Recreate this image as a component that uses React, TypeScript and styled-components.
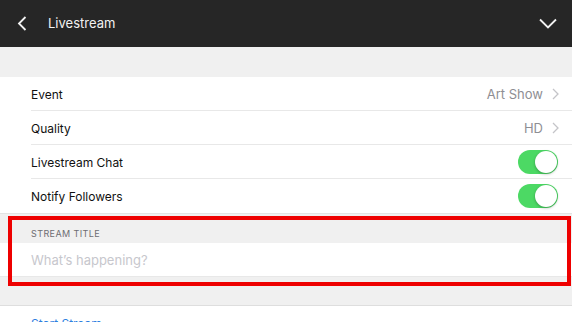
import * as React from 'react';
import styled, { createGlobalStyle } from 'styled-components';

const GlobalStyle = createGlobalStyle`
  html, body {
    margin: 0;
    padding: 0;
    background: #f0f0f0;
    overflow: hidden;
  }
  body {
    font-family: Inter, "Liberation Sans", Arial, sans-serif;
    -webkit-font-smoothing: antialiased;
  }
`;

const Screen = styled.div`
  position: relative;
  width: 572px;
  height: 322px;
  overflow: hidden;
  display: flex;
  flex-direction: column;
  & > * {
    flex-shrink: 0;
  }
`;

const NavBar = styled.header`
  height: 47px;
  background: #262626;
  display: flex;
  align-items: center;
  padding: 0 15px 0 17px;
`;

const NavTitle = styled.div`
  color: #f2f2f2;
  font-size: 13px;
  margin-left: 21px;
  flex: 1;
  padding-bottom: 1px;
`;

const Spacer = styled.div<{ $h: number }>`
  height: ${p => p.$h}px;
  background: #f0f0f0;
`;

const Group = styled.section`
  background: #fff;
  border-bottom: 1px solid #e3e3e3;
`;

const Row = styled.div<{ $last?: boolean }>`
  height: 34px;
  margin-left: 31px;
  padding-right: 13px;
  display: flex;
  align-items: center;
  box-sizing: border-box;
  border-bottom: ${p => (p.$last ? 'none' : '1px solid #e8e8e8')};
`;

const Label = styled.span`
  flex: 1;
  font-size: 12px;
  color: #111;
  padding-top: 1px;
`;

const Value = styled.span`
  font-size: 13px;
  color: #8e8e93;
  margin-right: 9px;
`;

const SwitchTrack = styled.div`
  width: 40px;
  height: 24px;
  border-radius: 12px;
  background: #4cd964;
  position: relative;
  margin-right: 1px;
`;

const SwitchKnob = styled.div`
  position: absolute;
  top: 1px;
  right: 1px;
  width: 22px;
  height: 22px;
  border-radius: 50%;
  background: #fff;
  box-shadow: 0 1px 3px rgba(0, 0, 0, 0.3);
`;

const SectionHeader = styled.div`
  height: 29px;
  box-sizing: border-box;
  padding: 14px 0 0 31px;
  font-size: 9px;
  letter-spacing: 0.4px;
  color: #6d6d72;
  background: #f0f0f0;
`;

const InputRow = styled.div`
  height: 33px;
  background: #fff;
  border-bottom: 1px solid #e8e8e8;
  display: flex;
  align-items: center;
  padding-left: 31px;
`;

const TitleInput = styled.input`
  border: none;
  outline: none;
  background: transparent;
  font-family: inherit;
  font-size: 13px;
  color: #111;
  padding: 0;
  width: 100%;
  &::placeholder {
    color: #c7c7cd;
  }
`;

const ActionGroup = styled.div`
  height: 40px;
  background: #fff;
  border-top: 1px solid #dedede;
  padding: 9px 0 0 31px;
  line-height: 14px;
`;

const ActionLink = styled.span`
  color: #2f80e0;
  font-size: 12px;
`;

const Highlight = styled.div`
  position: absolute;
  left: 8px;
  top: 216px;
  width: 563px;
  height: 70px;
  box-sizing: border-box;
  border: 4px solid #ee0000;
  pointer-events: none;
`;

const Chevron = () => (
  <svg width="7" height="12" viewBox="0 0 7 12" fill="none">
    <path d="M1 1l5 5-5 5" stroke="#c4c4c8" strokeWidth="1.3" />
  </svg>
);

const Switch = () => (
  <SwitchTrack>
    <SwitchKnob />
  </SwitchTrack>
);

const App: React.FC = () => (
  <Screen>
    <GlobalStyle />
    <NavBar>
      <svg width="10" height="15" viewBox="0 0 10 15" fill="none">
        <path d="M8.5 1L2 7.5 8.5 14" stroke="#f2f2f2" strokeWidth="1.8" />
      </svg>
      <NavTitle>Livestream</NavTitle>
      <svg width="18" height="11" viewBox="0 0 18 11" fill="none">
        <path d="M1 1.5l8 8 8-8" stroke="#f2f2f2" strokeWidth="1.8" />
      </svg>
    </NavBar>
    <Spacer $h={30} />
    <Group>
      <Row>
        <Label>Event</Label>
        <Value>Art Show</Value>
        <Chevron />
      </Row>
      <Row>
        <Label>Quality</Label>
        <Value>HD</Value>
        <Chevron />
      </Row>
      <Row>
        <Label>Livestream Chat</Label>
        <Switch />
      </Row>
      <Row $last>
        <Label>Notify Followers</Label>
        <Switch />
      </Row>
    </Group>
    <SectionHeader>STREAM TITLE</SectionHeader>
    <InputRow>
      <TitleInput placeholder="What’s happening?" />
    </InputRow>
    <Spacer $h={28} />
    <ActionGroup>
      <ActionLink>Start Stream</ActionLink>
    </ActionGroup>
    <Highlight />
  </Screen>
);

export default App;
